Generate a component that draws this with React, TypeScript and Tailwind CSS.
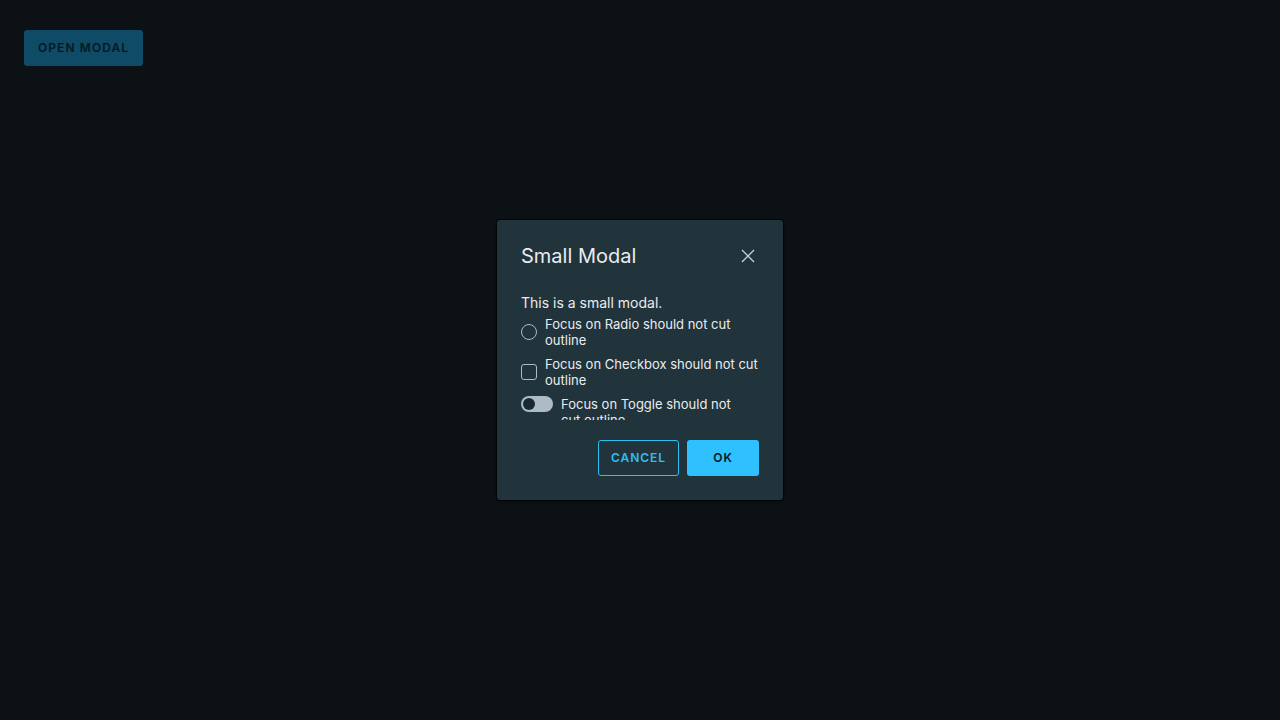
import React from 'react';

const font = { fontFamily: 'Inter, "Open Sans", sans-serif' };

export default function App() {
  return (
    <div className="relative w-[1280px] h-[720px] bg-[#0b1115] overflow-hidden" style={font}>
      {/* Trigger */}
      <div className="p-6 pt-[30px]">
        <button className="h-9 px-[14px] rounded-[3px] bg-[#0f4a66] text-[#061922] text-[12px] font-semibold tracking-[0.09em] uppercase">
          Open Modal
        </button>
      </div>

      {/* Modal */}
      <div className="absolute left-[497px] top-[220px] w-[286px] bg-[#21333b] rounded-[3px] shadow-[0_0_0_1px_rgba(0,0,0,0.55),0_1px_3px_rgba(0,0,0,0.6)] px-6 pt-6 pb-6 flex flex-col">
        <div className="flex items-center justify-between h-6">
          <h3 className="text-[20px] leading-6 text-[#e9ecef] font-normal">Small Modal</h3>
          <button className="w-6 h-6 -mr-[1px] flex items-center justify-center text-[#c1cdd4]" aria-label="Close">
            <svg width="16" height="16" viewBox="0 0 16 16" fill="none" stroke="currentColor" strokeWidth="1.4">
              <path d="M2 2 L14 14 M14 2 L2 14" />
            </svg>
          </button>
        </div>

        <div className="mt-[25px] h-[127px] -mr-1 overflow-hidden text-[#e9ecef]">
          <p className="text-[14px] leading-5">This is a small modal.</p>
          <div className="mt-[3px] flex gap-2 text-[13px] leading-4">
            <span className="mt-2 shrink-0 w-4 h-4 rounded-full border border-[#adbbc4]" />
            <span>Focus on Radio should not cut outline</span>
          </div>
          <div className="mt-2 flex gap-2 text-[13px] leading-4">
            <span className="mt-2 shrink-0 w-4 h-4 rounded-[3px] border border-[#adbbc4]" />
            <span>Focus on Checkbox should not cut outline</span>
          </div>
          <div className="mt-2 flex gap-2 text-[13px] leading-4">
            <span className="shrink-0 w-8 h-4 rounded-full bg-[#adbbc4] relative">
              <span className="absolute left-[2px] top-[2px] w-3 h-3 rounded-full bg-[#1b2a32]" />
            </span>
            <span className="w-[180px]">Focus on Toggle should not cut outline</span>
          </div>
        </div>

        <div className="mt-5 flex justify-end gap-2">
          <button className="h-9 w-[81px] rounded-[3px] border border-[#2ebff5] text-[#2ebff5] text-[12px] font-semibold tracking-[0.08em] uppercase">
            Cancel
          </button>
          <button className="h-9 w-[72px] rounded-[3px] bg-[#2fc0ff] text-[#08161d] text-[12px] font-semibold tracking-[0.08em] uppercase">
            OK
          </button>
        </div>
      </div>
    </div>
  );
}
